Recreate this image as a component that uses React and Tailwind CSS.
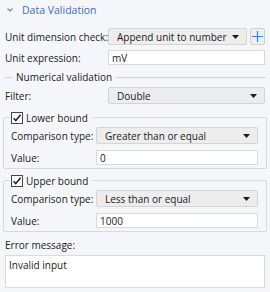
const Caret = () => (
  <svg width="7" height="4" viewBox="0 0 7 4" className="shrink-0">
    <path d="M0 0h7L3.5 4z" fill="#1a1a1a" />
  </svg>
);

const Combo = ({ value, className = '' }) => (
  <div
    className={`flex items-center justify-between h-[17px] pl-[8px] pr-[7px] border border-[#d4d4d4] bg-[#ededed] rounded-[2px] ${className}`}
  >
    <span className="truncate">{value}</span>
    <Caret />
  </div>
);

const Input = ({ value, className = '' }) => (
  <div className={`flex items-center h-[15px] pl-[3px] border border-[#dadada] bg-white ${className}`}>
    {value}
  </div>
);

const Check = () => (
  <div className="w-[12px] h-[12px] border border-[#444] bg-white flex items-center justify-center">
    <svg width="10" height="10" viewBox="0 0 10 10">
      <path d="M1.6 5.2l2.2 2.4L8.6 1.8" fill="none" stroke="#222" strokeWidth="1.5" />
    </svg>
  </div>
);

const BoundGroup = ({ title, type, value }) => (
  <div className="relative ml-[-2px] mr-[-2px] border border-[#d9d9d9] rounded-[2px] pt-[9px] pb-[3px] pl-[7px] pr-[8px]">
    <div className="absolute left-[6px] top-[-7px] flex items-center gap-[3px] bg-[#f5f6fa] pl-[1px] pr-[4px]">
      <Check />
      <span className="leading-[14px]">{title}</span>
    </div>
    <div className="flex items-center">
      <span className="w-[85px] shrink-0">Comparison type:</span>
      <Combo value={type} className="flex-1" />
    </div>
    <div className="flex items-center mt-[6px]">
      <span className="w-[85px] shrink-0">Value:</span>
      <Input value={value} className="flex-1" />
    </div>
  </div>
);

export default function App() {
  return (
    <div
      className="w-[270px] h-[292px] overflow-hidden bg-[#f5f6fa] text-[#1a1a1a] text-[10px] leading-[14px] whitespace-nowrap"
      style={{ fontFamily: '"Open Sans", "Noto Sans", sans-serif' }}
    >
      <div className="flex items-center h-[19px] pl-[7px]">
        <svg width="6" height="4" viewBox="0 0 6 4">
          <path d="M0.5 0.5L3 3L5.5 0.5" fill="none" stroke="#7088a6" strokeWidth="1.2" />
        </svg>
        <span className="ml-[9px] text-[10.5px] text-[#3c6fb5]">Data Validation</span>
      </div>

      <div className="px-[5px]">
        <div className="flex items-center mt-[9px] h-[17px]">
          <span className="w-[103px] shrink-0">Unit dimension check:</span>
          <Combo value="Append unit to number" className="flex-1" />
          <div className="ml-[3px] w-[15px] h-[17px] border border-[#d0d0d0] bg-[#efefef] rounded-[2px] flex items-center justify-center">
            <svg width="11" height="11" viewBox="0 0 11 11">
              <path d="M5.5 0v11M0 5.5h11" stroke="#3a86d6" strokeWidth="1.2" />
            </svg>
          </div>
        </div>

        <div className="flex items-center mt-[5px] h-[15px]">
          <span className="w-[103px] shrink-0">Unit expression:</span>
          <Input value="mV" className="flex-1" />
        </div>

        <div className="flex items-center mt-[5px] h-[14px]">
          <div className="w-[8px] h-px bg-[#d2d2d2]" />
          <span className="px-[3px]">Numerical validation</span>
          <div className="flex-1 h-px bg-[#d2d2d2]" />
        </div>

        <div className="flex items-center mt-[3px] h-[17px]">
          <span className="w-[103px] shrink-0">Filter:</span>
          <Combo value="Double" className="flex-1" />
        </div>

        <div className="mt-[13px]">
          <BoundGroup title="Lower bound" type="Greater than or equal" value="0" />
        </div>
        <div className="mt-[11px]">
          <BoundGroup title="Upper bound" type="Less than or equal" value="1000" />
        </div>

        <div className="mt-[6px] h-[14px]">Error message:</div>
        <div className="mt-[3px] h-[33px] border border-[#dadada] bg-white pl-[3px] pt-[2px]">Invalid input</div>
      </div>
    </div>
  );
}
